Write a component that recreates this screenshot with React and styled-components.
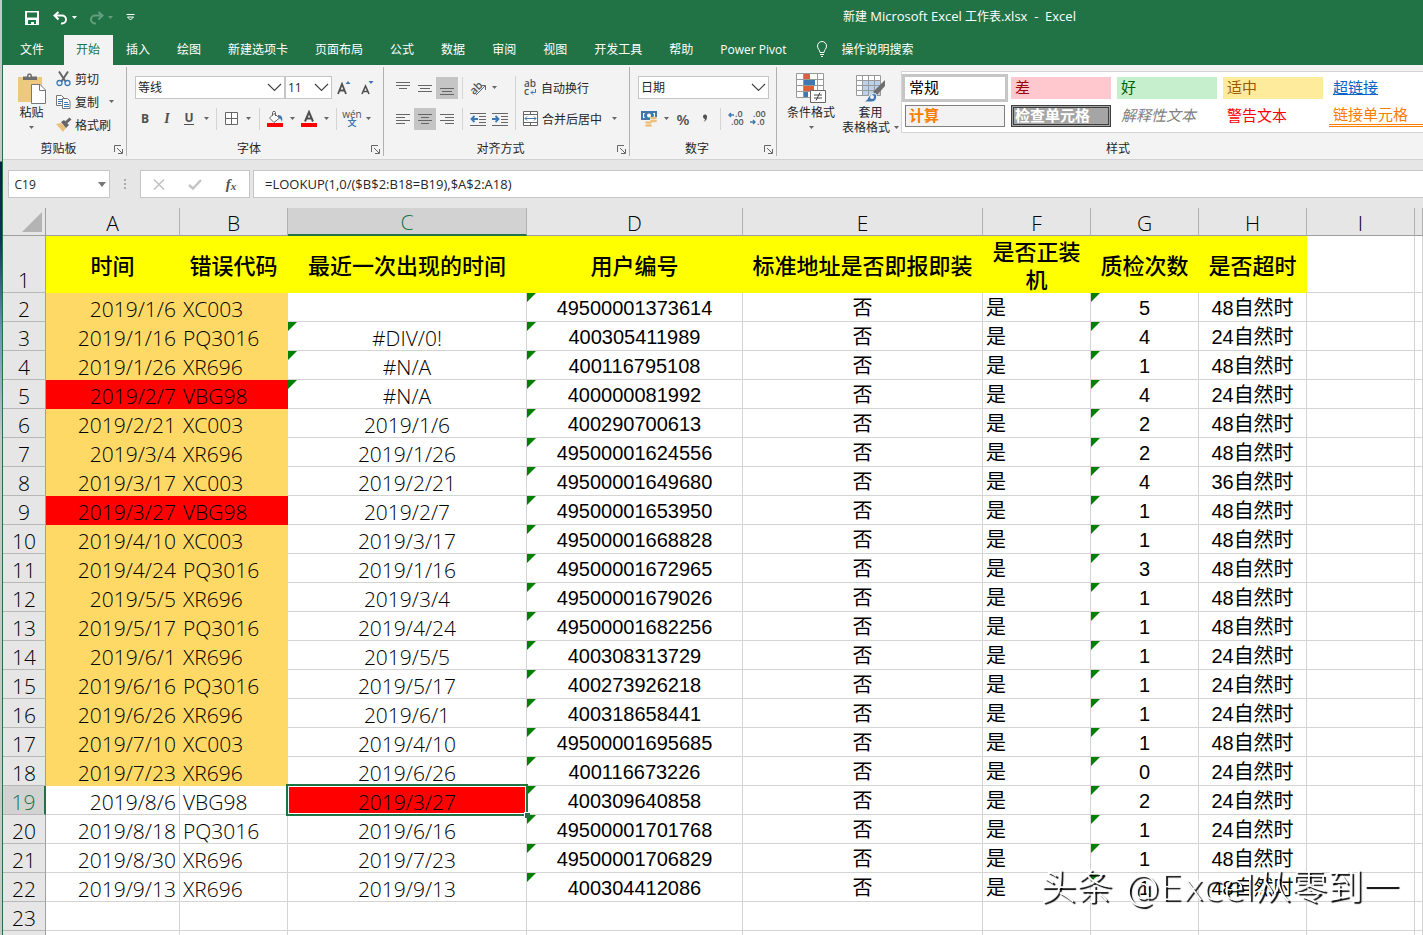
import React from 'react'
import styled, { createGlobalStyle, css } from 'styled-components'

const GlobalStyle = createGlobalStyle`
    * {
        box-sizing: border-box;
    }

    body {
        margin: 0;
        overflow: hidden;
        font-family: 'Open Sans', 'Noto Sans CJK SC', sans-serif;
        font-size: 12px;
        color: #262626;
    }

    button, input, select {
        margin: 0;
        padding: 0;
        border: 0;
        border-radius: 0;
        background: none;
        color: inherit;
        font: inherit;
    }

    svg {
        flex: none;
        overflow: visible;
    }
`

const Desktop = styled.div`
    height: 100vh;
    padding-left: 2px;
    overflow: hidden;
    background: linear-gradient(#c8c8c8 161px, #0b1f45 162px, #123063 240px, #6f8fc0 330px, #c8c8c8 440px);
`

const Window = styled.div`
    display: flex;
    flex-flow: column nowrap;
    min-height: 100%;
    border-left: 1px solid #217346;
    background: #e6e6e6;

    > * {
        flex-shrink: 0;
    }
`

const TitleBar = styled.header`
    display: flex;
    align-items: center;
    height: 35px;
    padding-left: 19px;
    background: #217346;
    color: #fff;
`

const QuickAccess = styled.div`
    display: flex;
    align-items: center;
    width: 130px;
`

const QuickButton = styled.button`
    display: flex;
    align-items: center;
    justify-content: center;
    gap: 4px;
    width: ${p => p.$w}px;
    height: 24px;
    opacity: ${p => (p.disabled ? 0.3 : 1)};
`

const Title = styled.div`
    flex: 1;
    padding: 0 0 3px 344px;
    text-align: center;
    white-space: pre;

    span {
        font-size: 13px;
    }
`

const Tabs = styled.nav`
    display: flex;
    height: 30px;
    padding-left: 4px;
    background: #217346;
    color: #fff;
`

const Tab = styled.button`
    display: flex;
    align-items: center;
    gap: 13px;
    padding: 0 14px 2px 13px;
    white-space: nowrap;

    ${p => p.$first && css`
        padding-right: 20px;
    `}

    ${p => p.$search && css`
        padding-left: 16px;
    `}

    ${p => p.$active && css`
        padding: 0 13px 2px 12px;
        background: #f3f3f3;
        color: #217346;
    `}
`

const Ribbon = styled.div`
    display: flex;
    height: 95px;
    border-bottom: 1px solid #d2d2d2;
    background: #f3f3f3;
`

const Group = styled.section`
    display: flex;
    flex-flow: column nowrap;
    flex: ${p => (p.$grow ? '1 1 0' : 'none')};
    min-width: 0;
    width: ${p => (p.$w ? p.$w + 'px' : 'auto')};
    margin: 2px 0 3px;
    border-right: ${p => (p.$grow ? '0' : '1px solid #b1b1b1')};
`

const GroupBody = styled.div`
    display: flex;
    flex: 1;
    padding-left: ${p => p.$pad || 0}px;
`

const GroupFoot = styled.div`
    display: flex;
    align-items: center;
    height: 16px;
    padding-left: ${p => p.$pad || 0}px;

    span {
        flex: 1;
        text-align: center;
    }

    button {
        width: 12px;
        height: 12px;
        padding-top: 3px;
    }

    svg {
        display: block;
    }
`

const Rows = styled.div`
    display: flex;
    flex-flow: column nowrap;
    gap: 8px;
    padding: 9px 0 0 ${p => p.$pad || 0}px;
`

const Row = styled.div`
    display: flex;
    align-items: center;
    height: 23px;
    padding-left: ${p => p.$pad || 0}px;
`

const Tool = styled.button`
    display: flex;
    align-items: center;
    justify-content: ${p => (p.$left ? 'flex-start' : 'center')};
    gap: 4px;
    width: ${p => (p.$w ? p.$w + 'px' : 'auto')};
    height: 22px;
    white-space: nowrap;
    background: ${p => (p.$on ? '#c5c5c5' : 'none')};
`

const Letter = styled.span`
    color: #505050;
    font-weight: 700;
    font-size: ${p => (p.$italic ? 14 : 12)}px;
    font-style: ${p => (p.$italic ? 'italic' : 'normal')};
    font-family: ${p => (p.$italic ? "'Liberation Serif', serif" : 'inherit')};
    line-height: 12px;
    border-bottom: ${p => (p.$under ? '1px solid #505050' : '0')};
`

const Divider = styled.i`
    width: 1px;
    height: ${p => p.$h || 22}px;
    margin: 0 4px;
    background: #d4d4d4;
`

const Picker = styled.label`
    position: relative;
    display: block;
    width: ${p => p.$w}px;
    height: 23px;

    select {
        width: 100%;
        height: 100%;
        padding: 0 2px;
        border: 1px solid #c6c6c6;
        background: #fff;
        appearance: none;
    }

    svg {
        position: absolute;
        top: 7px;
        right: 3px;
        pointer-events: none;
    }
`

const ClipboardList = styled.div`
    display: flex;
    flex-flow: column nowrap;

    button {
        height: 23px;
    }
`

const BigButton = styled.button`
    display: flex;
    flex-flow: column nowrap;
    align-items: center;
    width: ${p => p.$w}px;
    height: 70px;
    padding-top: 6px;
    line-height: 15px;
    white-space: nowrap;

    > svg:first-child {
        margin-bottom: 1px;
    }

    > svg:last-child {
        margin-top: 6px;
    }
`

const Line = styled.span`
    display: flex;
    align-items: center;
    gap: 4px;
`

const Gallery = styled.div`
    display: grid;
    grid-template-columns: repeat(5, 100px);
    grid-auto-rows: 22px;
    gap: 6px;
    flex: 1;
    min-width: 0;
    height: 62px;
    margin-top: 4px;
    padding: 5px 3px;
    overflow: hidden;
    border: 1px solid #d4d4d4;
    border-right: 0;
    background: #fff;
`

const Style = styled.button`
    padding: 0 4px;
    font-family: 'Liberation Sans', 'Noto Sans CJK SC', sans-serif;
    font-size: 15px;
    line-height: 20px;
    text-align: left;
    white-space: nowrap;
    color: ${p => p.$color || '#000'};
    background: ${p => p.$bg || '#fff'};
    font-weight: ${p => (p.$bold ? 700 : 400)};
    font-style: ${p => (p.$italic ? 'italic' : 'normal')};
    text-decoration: ${p => (p.$underline ? 'underline' : 'none')};

    ${p => p.$kind === 'normal' && css`
        outline: 3px solid #c6c6c6;
    `}

    ${p => p.$kind === 'calc' && css`
        padding: 0 3px;
        border: 1px solid #7f7f7f;
    `}

    ${p => p.$kind === 'check' && css`
        padding: 0 1px;
        border: 3px double #3f3f3f;
        line-height: 14px;
    `}

    ${p => p.$kind === 'linked' && css`
        border-bottom: 3px double #ff8001;
    `}
`

const FormulaBar = styled.div`
    display: flex;
    height: 48px;
    padding: 10px 0 10px 5px;
    font-size: 13px;
`

const Box = styled.div`
    display: flex;
    align-items: center;
    justify-content: space-around;
    border: 1px solid #c6c6c6;
    background: #fff;
    width: ${p => p.$w}px;
    height: 28px;

    input {
        width: 78px;
        height: 100%;
        padding-left: 2px;
        font-size: 12px;
    }
`

const Dots = styled.div`
    display: flex;
    justify-content: center;
    align-items: center;
    width: 30px;
`

const FormulaInput = styled.input`
    && {
        flex: 1;
        height: 28px;
        margin-left: 3px;
        padding: 0 11px;
        border: 1px solid #c6c6c6;
        border-right: 0;
        background: #fff;
    }
`

const Sheet = styled.table`
    width: 100%;
    table-layout: fixed;
    border-spacing: 0;
    background: #fff;
    color: #000;
    font-family: 'Open Sans', 'Noto Sans CJK SC', sans-serif;
    font-size: 21px;
    font-weight: 300;
`

const Corner = styled.td`
    height: 28px;
    padding: 0 3px 3px 0;
    border-right: 1px solid #9f9f9f;
    border-bottom: 1px solid #9f9f9f;
    background: #e6e6e6;
    vertical-align: bottom;

    svg {
        display: block;
        margin-left: auto;
    }
`

const ColHead = styled.th`
    height: 28px;
    padding: 3px 0 0;
    border-right: 1px solid #b1b1b1;
    border-bottom: ${p => (p.$on ? '2px solid #217346' : '1px solid #9f9f9f')};
    background: ${p => (p.$on ? '#d2d2d2' : '#e6e6e6')};
    color: ${p => (p.$on ? '#217346' : '#000')};
    font-weight: 300;
    line-height: 23px;
`

const RowHead = styled.th`
    height: ${p => (p.$tall ? 57 : 29)}px;
    padding: 0;
    border-right: ${p => (p.$on ? '2px solid #217346' : '1px solid #9f9f9f')};
    border-bottom: 1px solid #b8b8b8;
    background: ${p => (p.$on ? '#d2d2d2' : '#e6e6e6')};
    color: ${p => (p.$on ? '#217346' : '#000')};
    font-weight: 300;
    line-height: 24px;
    vertical-align: bottom;
`

const Cell = styled.td`
    position: relative;
    height: 29px;
    padding: 4px 3px 0;
    border-right: 1px solid ${p => p.$fill || '#d4d4d4'};
    border-bottom: 1px solid ${p => p.$fill || '#d4d4d4'};
    background: ${p => p.$fill || '#fff'};
    text-align: ${p => p.$align || 'center'};
    line-height: 24px;
    white-space: nowrap;

    ${p => p.$arial && css`
        padding-top: 2px;
        font-family: 'Liberation Sans', 'Noto Sans CJK SC', sans-serif;
        font-size: 20px;
        font-weight: 400;
    `}

    ${p => p.$flag && css`
        &::before {
            content: '';
            position: absolute;
            top: 0;
            left: 0;
            border-top: 9px solid #008000;
            border-right: 9px solid transparent;
        }
    `}

    ${p => p.$selected && css`
        &::after {
            content: '';
            position: absolute;
            z-index: 1;
            inset: -2px;
            border: 2px solid #217346;
            box-shadow: inset 0 0 0 1px #fff;
        }
    `}
`

const FillHandle = styled.i`
    position: absolute;
    right: -4px;
    bottom: -4px;
    z-index: 2;
    width: 6px;
    height: 6px;
    border: solid #fff;
    border-width: 1px 0 0 1px;
    background: #217346;
`

const HeadCell = styled.td`
    height: 57px;
    padding: 0 2px;
    background: ${p => (p.$empty ? '#fff' : '#ff0')};
    border-right: 1px solid ${p => (p.$empty ? '#d4d4d4' : '#ff0')};
    border-bottom: 1px solid ${p => (p.$empty ? '#d4d4d4' : '#ff0')};
    font-family: 'Noto Sans CJK SC', sans-serif;
    font-size: 22px;
    font-weight: 500;
    line-height: 28px;
    text-align: center;
`

const Watermark = styled.div`
    position: fixed;
    right: 24px;
    bottom: 21px;
    z-index: 3;
    color: #fff;
    font-family: 'DejaVu Sans', 'Noto Sans CJK SC', sans-serif;
    font-size: 36px;
    font-weight: 300;
    line-height: 52px;
    text-shadow: 2px 2px 1px #000;
    pointer-events: none;
`

const Arrow = ({ color = '#666' }) => (
    <svg width="5" height="3" viewBox="0 0 5 3"><path d="M0 0h5L2.5 3z" fill={color} /></svg>
)

const Chevron = () => (
    <svg width="15" height="9" viewBox="0 0 15 9" fill="none" stroke="#444" strokeWidth="1.2">
        <path d="M1 1l6.500 6.500L14 1" />
    </svg>
)

const Launcher = ({ label }) => (
    <button aria-label={label}>
        <svg width="9" height="9" viewBox="0 0 9 9" fill="none" stroke="#666">
            <path d="M.5 7V.5H7M3 3l5 5M8.500 4v4.500H4" />
        </svg>
    </button>
)

const DropArrow = ({ w, label }) => (
    <Tool $w={w} aria-label={label}><Arrow /></Tool>
)

const SaveIcon = () => (
    <svg width="14" height="14" viewBox="0 0 14 14">
        <path d="M0 0h14v14H0z" fill="#fff" />
        <path d="M2 1.500h10v5H2zM3 9h8v4H9v-2H6v2H3z" fill="#217346" />
    </svg>
)

const UndoIcon = () => (
    <svg width="15" height="14" viewBox="0 0 15 14" fill="none" stroke="#fff" strokeWidth="2">
        <path d="M5.500 1L1.500 4.500l4 4M2 4.500h7a4 4 0 0 1 0 8H8" />
    </svg>
)

const RedoIcon = () => (
    <svg width="15" height="14" viewBox="0 0 15 14" fill="none" stroke="#fff" strokeWidth="2">
        <path d="M9.500 1l4 3.500-4 4M13 4.500H6a4 4 0 0 0 0 8h1" />
    </svg>
)

const CustomizeIcon = () => (
    <svg width="9" height="7" viewBox="0 0 9 7" fill="none" stroke="#fff">
        <path d="M.5.5h8M1.500 3l3 3 3-3z" />
    </svg>
)

const BulbIcon = () => (
    <svg width="12" height="16" viewBox="0 0 12 16" fill="none" stroke="#fff">
        <path d="M4 11.500C4 9 1.500 8 1.500 5a4.500 4.500 0 0 1 9 0c0 3-2.500 4-2.500 6.500zM4 13.500h4M5 15.500h2" />
    </svg>
)

const PasteIcon = () => (
    <svg width="30" height="31" viewBox="0 0 30 31">
        <path d="M1 4h24v25H1z" fill="#edc87e" />
        <path d="M6 7V3.500h4C10 1 11 .5 12.500.5S15 1 15 3.500h5V7z" fill="#6e6e6e" />
        <circle cx="12.500" cy="3" r="1" fill="#fff" />
        <path d="M14.500 11.500h8.500l5.500 5.500v13.500h-14z" fill="#fff" stroke="#777" />
        <path d="M22.500 11.500v6h6" fill="none" stroke="#777" />
    </svg>
)

const CutIcon = () => (
    <svg width="15" height="16" viewBox="0 0 15 16" fill="none">
        <path d="M3 .5l6.500 10M12 .5L5.500 10.500" stroke="#666" strokeWidth="2" />
        <circle cx="3.500" cy="12" r="2.500" stroke="#3e78b3" strokeWidth="1.300" />
        <circle cx="11.500" cy="12" r="2.500" stroke="#3e78b3" strokeWidth="1.300" />
    </svg>
)

const CopyIcon = () => (
    <svg width="15" height="14" viewBox="0 0 15 14">
        <path d="M.5.5h5L8 3v7.500H.5z" fill="#fff" stroke="#777" />
        <path d="M2 4.500h4M2 6.500h4M2 8.500h3" stroke="#3e78b3" />
        <path d="M6.500 3.500h5L14 6v7.500H6.500z" fill="#fff" stroke="#777" />
        <path d="M8 7.500h4M8 9.500h5M8 11.500h5" stroke="#3e78b3" />
    </svg>
)

const BrushIcon = () => (
    <svg width="15" height="14" viewBox="0 0 15 14">
        <path d="M0 6l5-1 5 5-3 4z" fill="#edc07a" />
        <path d="M5 4l3-2 5 5-3 3z" fill="#666" />
        <path d="M10 4.500L14.500.5" stroke="#666" strokeWidth="3" />
    </svg>
)

const BordersIcon = () => (
    <svg width="13" height="13" viewBox="0 0 13 13" fill="#fff" stroke="#666">
        <path d="M.5.5h12v12H.5zM6.500.5v12M.5 6.500h12" />
    </svg>
)

const BucketIcon = () => (
    <svg width="16" height="16" viewBox="0 0 16 16">
        <path d="M11 4c4 0 5 3 4 7-1-3-2-4-4-4z" fill="#3e78b3" />
        <path d="M7 2.500L12.500 7 7 11.500 2.500 7z" fill="#fff" stroke="#666" />
        <path d="M5.500 5V1.500c0-1.500 3-1.500 3 0V5" fill="none" stroke="#666" />
        <path d="M0 12h16v4H0z" fill="#f00" />
    </svg>
)

const FontColorIcon = () => (
    <svg width="16" height="16" viewBox="0 0 16 16">
        <path d="M4 10.500L8 1l4 9.500M5.500 7.500h5" fill="none" stroke="#505050" strokeWidth="2" />
        <path d="M0 12h16v4H0z" fill="#f00" />
    </svg>
)

const SizeIcon = ({ down }) => (
    <svg width="14" height="16" viewBox="0 0 14 16">
        {down
            ? <path d="M2 14l3.500-8L9 14M3.500 11.500h4" fill="none" stroke="#505050" strokeWidth="1.600" />
            : <path d="M1 14L5 4l4 10M2.500 10.500h5" fill="none" stroke="#505050" strokeWidth="1.800" />}
        <path d={down ? 'M8.500 1h5L11 4z' : 'M8.500 4h5L11 1z'} fill="#3e78b3" />
    </svg>
)

const Phonetic = styled.span`
    display: flex;
    flex-flow: column nowrap;
    align-items: center;
    font-size: 10px;
    line-height: 8px;
    color: #505050;

    b {
        color: #3e78b3;
        font-size: 9px;
        line-height: 9px;
    }
`

// each entry is [x, width, y] of one text line
const alignLines = {
    top: [[0, 14, 2], [0, 14, 5], [3, 8, 8]],
    middle: [[0, 14, 5], [2, 10, 8], [0, 14, 11]],
    bottom: [[0, 14, 8], [2, 10, 11], [0, 14, 14]],
    left: [[0, 14, 3], [0, 9, 6], [0, 14, 9], [0, 9, 12]],
    center: [[0, 14, 3], [3, 8, 6], [0, 14, 9], [3, 8, 12]],
    right: [[0, 14, 3], [5, 9, 6], [0, 14, 9], [5, 9, 12]],
}

const LinesIcon = ({ kind }) => (
    <svg width="14" height="16" viewBox="0 0 14 16" fill="#666">
        {alignLines[kind].map(([x, w, y]) => <rect key={y} x={x} y={y} width={w} height="1" />)}
    </svg>
)

const IndentIcon = ({ out }) => (
    <svg width="16" height="14" viewBox="0 0 16 14">
        <path d="M0 1.500h16M9 4.500h7M9 7.500h7M9 10.500h7M0 13.500h16" stroke="#666" />
        <path
            d={out ? 'M8 7H2M4.500 4L1.500 7l3 3' : 'M0 7h6M3.500 4l3 3-3 3'}
            fill="none" stroke="#3e78b3" strokeWidth="1.800"
        />
    </svg>
)

const OrientationIcon = () => (
    <svg width="17" height="16" viewBox="0 0 17 16">
        <text x="0" y="12" transform="rotate(-45 6 9)" fontSize="11" fontWeight="600" fill="#555">ab</text>
        <path d="M6 15l9-9M11 5.500h4.500V10" fill="none" stroke="#666" />
    </svg>
)

const WrapIcon = () => (
    <svg width="14" height="16" viewBox="0 0 14 16">
        <text x="1" y="7" fontSize="10" fontWeight="600" fill="#555">ab</text>
        <text x="1" y="15" fontSize="10" fontWeight="600" fill="#555">c</text>
        <path d="M12.500 9v3.500H8M10 10.500l-2 2 2 2" fill="none" stroke="#3e78b3" />
    </svg>
)

const MergeIcon = () => (
    <svg width="15" height="15" viewBox="0 0 15 15">
        <path d="M.5.5h14v14H.5zM.5 3.500h14M.5 11.500h14M7.500.5v3M7.500 11.500v3" fill="#fff" stroke="#666" />
        <path d="M2 7.500h11M4 5.500l-2 2 2 2M11 5.500l2 2-2 2" fill="none" stroke="#3e78b3" />
    </svg>
)

const MoneyIcon = () => (
    <svg width="17" height="16" viewBox="0 0 17 16">
        <path d="M0 0h16v9H0z" fill="#3e78b3" />
        <path d="M2 2h2a4 4 0 0 0 0 5H2zM14 2h-2a4 4 0 0 1 0 5h2z" fill="#fff" />
        <circle cx="8" cy="4.500" r="2" fill="#fff" />
        <path d="M9 6h7v8H9z" fill="#f3f3f3" />
        <g fill="#edc07a">
            <ellipse cx="12.500" cy="7" rx="3.500" ry="1.300" />
            <ellipse cx="12.500" cy="10" rx="3.500" ry="1.300" />
            <ellipse cx="7.500" cy="11.500" rx="3.500" ry="1.300" />
            <ellipse cx="7.500" cy="14.500" rx="3.500" ry="1.300" />
        </g>
    </svg>
)

const DecimalIcon = ({ less }) => (
    <svg width="16" height="15" viewBox="0 0 16 15" fontSize="9" fontWeight="600" fill="#555">
        <text x={less ? 3 : 7} y="6">{less ? '.00' : '.0'}</text>
        <text x={less ? 7 : 3} y="14">{less ? '.0' : '.00'}</text>
        <path
            d={less ? 'M0 11h5M3 9l2 2-2 2' : 'M6 4H1M3 2L1 4l2 2'}
            fill="none" stroke="#3e78b3" strokeWidth="1.400"
        />
    </svg>
)

const CommaIcon = () => (
    <svg width="6" height="10" viewBox="0 0 6 10">
        <path d="M1 2a2 2 0 1 1 4 1c0 2-1 4-3.500 5 1-1 1.500-2 1.500-3C2 5 1 4 1 2z" fill="#505050" />
    </svg>
)

const ConditionalIcon = () => (
    <svg width="31" height="31" viewBox="0 0 31 31">
        <path d="M.5.5h27v24H.5z" fill="#fff" />
        <path d="M8 1h6v5H8zM8 13h10v5H8z" fill="#dc5f3c" />
        <path d="M8 7h11v5H8zM8 19h4v5H8z" fill="#3e78b3" />
        <path d="M.5.5h27v24H.5zM7.500.5v24M21.500.5v24M.5 6.500h27M.5 12.500h27M.5 18.500h27" fill="none" stroke="#999" />
        <path d="M14.500 17.500h15v12h-15z" fill="#fff" stroke="#666" />
        <path d="M18 22h8M18 25h8M24 19.500l-4 8" stroke="#444" />
    </svg>
)

const TableIcon = () => (
    <svg width="31" height="31" viewBox="0 0 31 31">
        <path d="M1.500 2.500h24v20h-24z" fill="#fff" />
        <path d="M8 8h18v15H8z" fill="#bcd2ea" />
        <path d="M1.500 2.500h24v20h-24zM7.500 2.500v20M13.500 2.500v20M19.500 2.500v20M1.500 7.500h24M1.500 12.500h24M1.500 17.500h24" fill="none" stroke="#999" />
        <path d="M30 7v6l-8 9-4-3z" fill="#6e6e6e" />
        <path d="M21 21c2 4-1 8-4 8H8c4-1 4-3 6-6 2-2 5-3 7-2z" fill="#3e78b3" stroke="#f3f3f3" />
        <circle cx="17" cy="24" r="2" fill="#f3f3f3" />
    </svg>
)

const PercentSign = styled.span`
    color: #505050;
    font-size: 15px;
    font-weight: 600;
`

const Fx = styled.span`
    color: #555;
    font-family: 'Liberation Serif', serif;
    font-size: 15px;
    font-style: italic;
    font-weight: 700;
    line-height: 15px;

    sub {
        font-size: 11px;
        line-height: 0;
        vertical-align: -1px;
    }
`

const tabs = ['插入', '绘图', '新建选项卡', '页面布局', '公式', '数据', '审阅', '视图', '开发工具', '帮助', 'Power Pivot']

const cellStyles = [
    { name: '常规', $kind: 'normal' },
    { name: '差', $bg: '#ffc7ce', $color: '#9c0006' },
    { name: '好', $bg: '#c6efce', $color: '#006100' },
    { name: '适中', $bg: '#ffeb9c', $color: '#9c5700' },
    { name: '超链接', $color: '#0563c1', $underline: true },
    { name: '计算', $kind: 'calc', $bg: '#f2f2f2', $color: '#fa7d00', $bold: true },
    { name: '检查单元格', $kind: 'check', $bg: '#a5a5a5', $color: '#fff', $bold: true },
    { name: '解释性文本', $color: '#7f7f7f', $italic: true },
    { name: '警告文本', $color: '#f00' },
    { name: '链接单元格', $kind: 'linked', $color: '#fa7d00' },
]

const columns = [
    ['A', 134], ['B', 108], ['C', 239], ['D', 216], ['E', 240],
    ['F', 108], ['G', 108], ['H', 108], ['I', 108], ['', null],
]

const headings = ['时间', '错误代码', '最近一次出现的时间', '用户编号', '标准地址是否即报即装', '是否正装机', '质检次数', '是否超时']

const records = [
    ['2019/1/6', 'XC003', '', '49500001373614', 5, 48],
    ['2019/1/16', 'PQ3016', '#DIV/0!', '400305411989', 4, 24],
    ['2019/1/26', 'XR696', '#N/A', '400116795108', 1, 48],
    ['2019/2/7', 'VBG98', '#N/A', '400000081992', 4, 24],
    ['2019/2/21', 'XC003', '2019/1/6', '400290700613', 2, 48],
    ['2019/3/4', 'XR696', '2019/1/26', '49500001624556', 2, 48],
    ['2019/3/17', 'XC003', '2019/2/21', '49500001649680', 4, 36],
    ['2019/3/27', 'VBG98', '2019/2/7', '49500001653950', 1, 48],
    ['2019/4/10', 'XC003', '2019/3/17', '49500001668828', 1, 48],
    ['2019/4/24', 'PQ3016', '2019/1/16', '49500001672965', 3, 48],
    ['2019/5/5', 'XR696', '2019/3/4', '49500001679026', 1, 48],
    ['2019/5/17', 'PQ3016', '2019/4/24', '49500001682256', 1, 48],
    ['2019/6/1', 'XR696', '2019/5/5', '400308313729', 1, 24],
    ['2019/6/16', 'PQ3016', '2019/5/17', '400273926218', 1, 24],
    ['2019/6/26', 'XR696', '2019/6/1', '400318658441', 1, 24],
    ['2019/7/10', 'XC003', '2019/4/10', '49500001695685', 1, 48],
    ['2019/7/23', 'XR696', '2019/6/26', '400116673226', 0, 24],
    ['2019/8/6', 'VBG98', '2019/3/27', '400309640858', 2, 24],
    ['2019/8/18', 'PQ3016', '2019/6/16', '49500001701768', 1, 24],
    ['2019/8/30', 'XR696', '2019/7/23', '49500001706829', 1, 48],
    ['2019/9/13', 'XR696', '2019/9/13', '400304412086', 1, 48],
]

const SELECTED_ROW = 19

const rowFill = row => {
    if (row === 5 || row === 9) return '#f00'
    return row <= 18 ? '#ffd966' : undefined
}

const Record = ({ row, record }) => {
    const [date, code, last, user, checks, hours] = record
    const on = row === SELECTED_ROW
    const fill = rowFill(row)

    return (
        <tr>
            <RowHead scope="row" $on={on}>{row}</RowHead>
            <Cell $fill={fill} $align="right">{date}</Cell>
            <Cell $fill={fill} $align="left">{code}</Cell>
            <Cell $fill={on ? '#f00' : undefined} $selected={on} $flag={row >= 3 && row <= 5}>
                {last}
                {on && <FillHandle />}
            </Cell>
            <Cell $arial $flag>{user}</Cell>
            <Cell $arial>否</Cell>
            <Cell $arial $align="left">是</Cell>
            <Cell $arial $flag>{checks}</Cell>
            <Cell $arial>{hours}自然时</Cell>
            <Cell />
            <Cell />
        </tr>
    )
}

const Header = () => (
    <>
        <TitleBar>
            <QuickAccess>
                <QuickButton $w={20} aria-label="保存"><SaveIcon /></QuickButton>
                <QuickButton $w={46} aria-label="撤消"><UndoIcon /><Arrow color="#fff" /></QuickButton>
                <QuickButton $w={26} disabled aria-label="恢复"><RedoIcon /><Arrow color="#fff" /></QuickButton>
                <QuickButton $w={32} aria-label="自定义快速访问工具栏"><CustomizeIcon /></QuickButton>
            </QuickAccess>
            <Title>新建 <span>Microsoft Excel</span> 工作表<span>.xlsx  -  Excel</span></Title>
        </TitleBar>
        <Tabs>
            <Tab $first>文件</Tab>
            <Tab $active>开始</Tab>
            {tabs.map(tab => <Tab key={tab}>{tab}</Tab>)}
            <Tab $search><BulbIcon />操作说明搜索</Tab>
        </Tabs>
    </>
)

const ClipboardGroup = () => (
    <Group $w={124}>
        <GroupBody $pad={4}>
            <BigButton $w={49}>
                <PasteIcon />
                粘贴
                <Arrow />
            </BigButton>
            <ClipboardList>
                <Tool $left><CutIcon />剪切</Tool>
                <Row>
                    <Tool $left $w={50}><CopyIcon />复制</Tool>
                    <DropArrow w={11} label="复制选项" />
                </Row>
                <Tool $left><BrushIcon />格式刷</Tool>
            </ClipboardList>
        </GroupBody>
        <GroupFoot><span>剪贴板</span><Launcher label="剪贴板设置" /></GroupFoot>
    </Group>
)

const FontGroup = () => (
    <Group $w={257}>
        <GroupBody $pad={7}>
            <Rows>
                <Row $pad={1}>
                    <Picker $w={150}><select aria-label="字体" defaultValue="等线"><option>等线</option></select><Chevron /></Picker>
                    <Picker $w={47}><select aria-label="字号" defaultValue="11"><option>11</option></select><Chevron /></Picker>
                    <Tool $w={24} aria-label="增大字号"><SizeIcon /></Tool>
                    <Tool $w={22} aria-label="减小字号"><SizeIcon down /></Tool>
                </Row>
                <Row>
                    <Tool $w={22} aria-label="加粗"><Letter>B</Letter></Tool>
                    <Tool $w={22} aria-label="倾斜"><Letter $italic>I</Letter></Tool>
                    <Tool $w={22} aria-label="下划线"><Letter $under>U</Letter></Tool>
                    <DropArrow w={12} label="下划线选项" />
                    <Divider />
                    <Tool $w={20} aria-label="边框"><BordersIcon /></Tool>
                    <DropArrow w={14} label="边框选项" />
                    <Divider />
                    <Tool $w={22} aria-label="填充颜色"><BucketIcon /></Tool>
                    <DropArrow w={12} label="填充颜色选项" />
                    <Tool $w={22} aria-label="字体颜色"><FontColorIcon /></Tool>
                    <DropArrow w={12} label="字体颜色选项" />
                    <Divider />
                    <Tool $w={22} aria-label="拼音"><Phonetic>wén<b>文</b></Phonetic></Tool>
                    <DropArrow w={10} label="拼音选项" />
                </Row>
            </Rows>
        </GroupBody>
        <GroupFoot><span>字体</span><Launcher label="字体设置" /></GroupFoot>
    </Group>
)

const AlignGroup = () => (
    <Group $w={246}>
        <GroupBody $pad={8}>
            <Rows>
                <Row>
                    <Tool $w={22} aria-label="顶端对齐"><LinesIcon kind="top" /></Tool>
                    <Tool $w={22} aria-label="垂直居中"><LinesIcon kind="middle" /></Tool>
                    <Tool $w={22} $on aria-label="底端对齐"><LinesIcon kind="bottom" /></Tool>
                    <Divider />
                    <Tool $w={22} aria-label="方向"><OrientationIcon /></Tool>
                    <DropArrow w={10} label="方向选项" />
                </Row>
                <Row>
                    <Tool $w={22} aria-label="左对齐"><LinesIcon kind="left" /></Tool>
                    <Tool $w={22} $on aria-label="居中"><LinesIcon kind="center" /></Tool>
                    <Tool $w={22} aria-label="右对齐"><LinesIcon kind="right" /></Tool>
                    <Divider />
                    <Tool $w={22} aria-label="减少缩进量"><IndentIcon out /></Tool>
                    <Tool $w={22} aria-label="增加缩进量"><IndentIcon /></Tool>
                </Row>
            </Rows>
            <Rows><Divider $h={54} /></Rows>
            <Rows $pad={3}>
                <Row><Tool $left><WrapIcon />自动换行</Tool></Row>
                <Row>
                    <Tool $left><MergeIcon />合并后居中</Tool>
                    <DropArrow w={24} label="合并选项" />
                </Row>
            </Rows>
        </GroupBody>
        <GroupFoot><span>对齐方式</span><Launcher label="对齐设置" /></GroupFoot>
    </Group>
)

const NumberGroup = () => (
    <Group $w={147}>
        <GroupBody $pad={8}>
            <Rows>
                <Row>
                    <Picker $w={131}><select aria-label="数字格式" defaultValue="日期"><option>日期</option></select><Chevron /></Picker>
                </Row>
                <Row>
                    <Tool $w={22} aria-label="会计数字格式"><MoneyIcon /></Tool>
                    <DropArrow w={12} label="会计数字格式选项" />
                    <Tool $w={22} aria-label="百分比样式"><PercentSign>%</PercentSign></Tool>
                    <Tool $w={22} aria-label="千位分隔样式"><CommaIcon /></Tool>
                    <Divider />
                    <Tool $w={22} aria-label="增加小数位数"><DecimalIcon /></Tool>
                    <Tool $w={22} aria-label="减少小数位数"><DecimalIcon less /></Tool>
                </Row>
            </Rows>
        </GroupBody>
        <GroupFoot><span>数字</span><Launcher label="数字设置" /></GroupFoot>
    </Group>
)

const StylesGroup = () => (
    <Group $grow>
        <GroupBody $pad={5}>
            <BigButton $w={58}>
                <ConditionalIcon />
                条件格式
                <Arrow />
            </BigButton>
            <BigButton $w={61}>
                <TableIcon />
                套用
                <Line>表格格式<Arrow /></Line>
            </BigButton>
            <Gallery>
                {cellStyles.map(({ name, ...style }) => <Style key={name} {...style}>{name}</Style>)}
            </Gallery>
        </GroupBody>
        <GroupFoot $pad={36}><span>样式</span></GroupFoot>
    </Group>
)

const Formula = () => (
    <FormulaBar>
        <Box $w={102}>
            <input aria-label="名称框" defaultValue="C19" />
            <svg width="8" height="5" viewBox="0 0 8 5"><path d="M0 0h8L4 5z" fill="#777" /></svg>
        </Box>
        <Dots>
            <svg width="2" height="10" viewBox="0 0 2 10" fill="#aaa"><path d="M0 0h2v2H0zM0 4h2v2H0zM0 8h2v2H0z" /></svg>
        </Dots>
        <Box $w={110}>
            <Tool $w={22} aria-label="取消">
                <svg width="12" height="11" viewBox="0 0 12 11" stroke="#c3c3c3" strokeWidth="1.600"><path d="M1 .5l10 10M11 .5l-10 10" /></svg>
            </Tool>
            <Tool $w={22} aria-label="输入">
                <svg width="14" height="11" viewBox="0 0 14 11" fill="none" stroke="#c3c3c3" strokeWidth="2.400"><path d="M1 6l4 3.500L13 1" /></svg>
            </Tool>
            <Tool $w={22} aria-label="插入函数"><Fx>f<sub>x</sub></Fx></Tool>
        </Box>
        <FormulaInput aria-label="编辑栏" defaultValue="=LOOKUP(1,0/($B$2:B18=B19),$A$2:A18)" />
    </FormulaBar>
)

const App = () => (
    <Desktop>
        <GlobalStyle />
        <Window>
            <Header />
            <Ribbon>
                <ClipboardGroup />
                <FontGroup />
                <AlignGroup />
                <NumberGroup />
                <StylesGroup />
            </Ribbon>
            <Formula />
            <Sheet>
                <colgroup>
                    <col width="43" />
                    {columns.map(([name, width]) => <col key={name} width={width || undefined} />)}
                </colgroup>
                <thead>
                    <tr>
                        <Corner>
                            <svg width="20" height="20" viewBox="0 0 20 20"><path d="M20 0v20H0z" fill="#b4b4b4" /></svg>
                        </Corner>
                        {columns.map(([name]) => <ColHead key={name} scope="col" $on={name === 'C'}>{name}</ColHead>)}
                    </tr>
                </thead>
                <tbody>
                    <tr>
                        <RowHead scope="row" $tall>1</RowHead>
                        {headings.map(text => <HeadCell key={text}>{text}</HeadCell>)}
                        <HeadCell $empty />
                        <HeadCell $empty />
                    </tr>
                    {records.map((record, i) => <Record key={i} row={i + 2} record={record} />)}
                    <tr>
                        <RowHead scope="row">23</RowHead>
                        {columns.map(([name]) => <Cell key={name} />)}
                    </tr>
                    <tr>
                        <RowHead scope="row" />
                        {columns.map(([name]) => <Cell key={name} />)}
                    </tr>
                </tbody>
            </Sheet>
        </Window>
        <Watermark>头条 @Excel从零到一</Watermark>
    </Desktop>
)

export default App
